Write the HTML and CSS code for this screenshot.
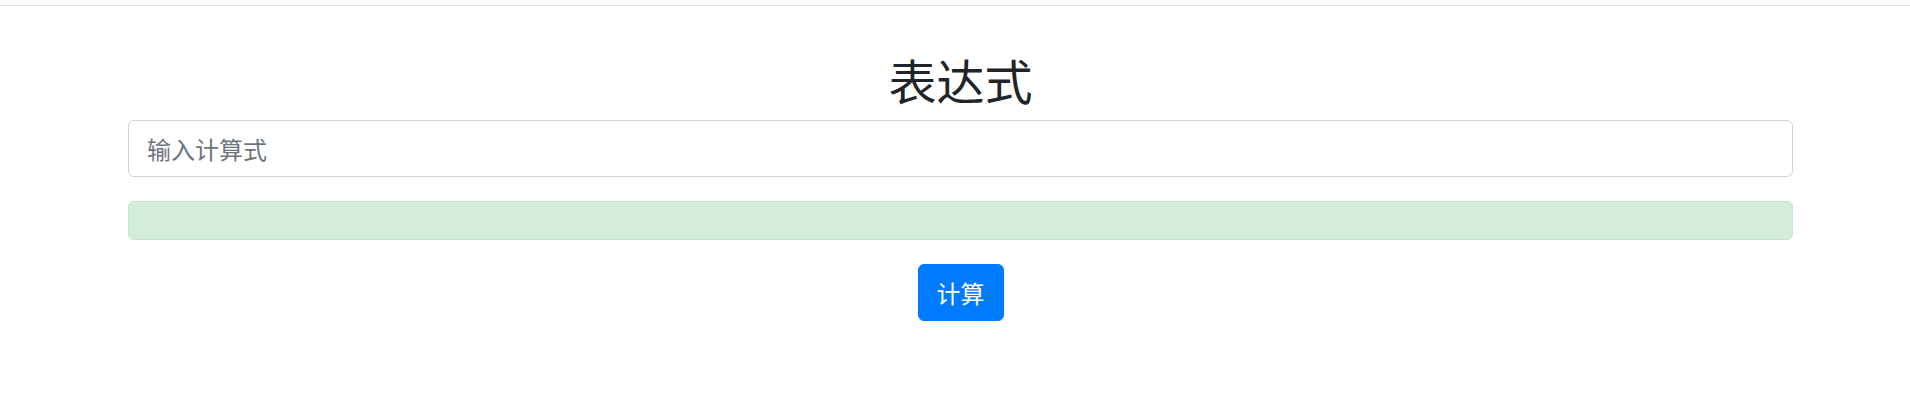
FILE: index.html
```html
<!DOCTYPE html>
<html lang="zh">
<head>
<meta charset="utf-8">
<title>表达式</title>
<link rel="stylesheet" href="styles.css">
</head>
<body>
<div class="topbar"></div>
<main class="container">
  <h2 class="title">表达式</h2>
  <input class="form-control" type="text" placeholder="输入计算式">
  <div class="alert"></div>
  <div class="actions">
    <button class="btn" type="button">计算</button>
  </div>
</main>
</body>
</html>
```
FILE: styles.css
```css
* { box-sizing: border-box; }
html, body { margin: 0; padding: 0; background: #fff; }
body {
  font-family: "Liberation Sans", "Noto Sans CJK SC", sans-serif;
  color: #212529;
  width: 1910px;
  overflow: hidden;
}
.topbar {
  height: 6px;
  border-bottom: 1px solid #dee2e6;
}
.container {
  margin-left: 128px;
  width: 1665px;
  padding-top: 45px;
}
.title {
  margin: 0 0 12px 0;
  font-family: "Noto Sans CJK SC", sans-serif;
  font-weight: 400;
  font-size: 48px;
  line-height: 57px;
  text-align: center;
  color: #212529;
}
.form-control {
  display: block;
  width: 100%;
  height: 57px;
  padding: 0 18px;
  font-family: "Noto Sans CJK SC", sans-serif;
  font-size: 24px;
  color: #495057;
  background: #fff;
  border: 1px solid #ced4da;
  border-radius: 6px;
  outline: none;
}
.form-control::placeholder { color: #6c757d; }
.alert {
  margin-top: 24px;
  height: 39px;
  background: #d4edda;
  border: 1px solid #c3e6cb;
  border-radius: 6px;
}
.actions {
  margin-top: 24px;
  display: flex;
  justify-content: center;
}
.btn {
  width: 86px;
  height: 57px;
  padding: 0;
  font-family: "Noto Sans CJK SC", sans-serif;
  font-size: 24px;
  color: #fff;
  background: #007bff;
  border: 1px solid #007bff;
  border-radius: 6px;
}
```
